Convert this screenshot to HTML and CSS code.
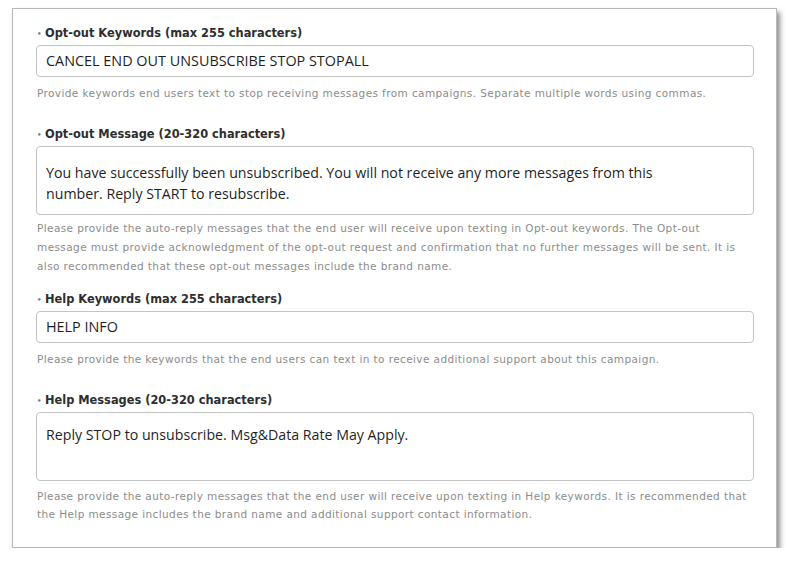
FILE: index.html
```html
<!DOCTYPE html>
<html lang="en">
<head>
    <meta charset="UTF-8">
    <meta name="viewport" content="width=device-width, initial-scale=1.0">
    <title>Opt-out and Help Settings</title>
    <link rel="stylesheet" href="styles.css">
</head>
<body>
    <div class="card">

        <!-- Opt-out keywords -->
        <div class="field">
            <label class="field-label"><span class="dot">&bull;</span>Opt-out Keywords (max 255 characters)</label>
            <div class="input">CANCEL END OUT UNSUBSCRIBE STOP STOPALL</div>
            <p class="hint">Provide keywords end users text to stop receiving messages from campaigns. Separate multiple words using commas.</p>
        </div>

        <!-- Opt-out message -->
        <div class="field field-tight">
            <label class="field-label"><span class="dot">&bull;</span>Opt-out Message (20-320 characters)</label>
            <div class="textbox textbox-tall">You have successfully been unsubscribed. You will not receive any more messages from this<br>number. Reply START to resubscribe.</div>
            <p class="hint hint-long">Please provide the auto-reply messages that the end user will receive upon texting in Opt-out keywords. The Opt-out<br>message must provide acknowledgment of the opt-out request and confirmation that no further messages will be sent. It is<br>also recommended that these opt-out messages include the brand name.</p>
        </div>

        <!-- Help keywords -->
        <div class="field">
            <label class="field-label"><span class="dot">&bull;</span>Help Keywords (max 255 characters)</label>
            <div class="input">HELP INFO</div>
            <p class="hint">Please provide the keywords that the end users can text in to receive additional support about this campaign.</p>
        </div>

        <!-- Help messages -->
        <div class="field field-last">
            <label class="field-label"><span class="dot">&bull;</span>Help Messages (20-320 characters)</label>
            <div class="textbox">Reply STOP to unsubscribe. Msg&amp;Data Rate May Apply.</div>
            <p class="hint hint-long hint-help">Please provide the auto-reply messages that the end user will receive upon texting in Help keywords. It is recommended that<br>the Help message includes the brand name and additional support contact information.</p>
        </div>

    </div>
</body>
</html>
```

FILE: styles.css
```css
body {
    margin: 0;
    padding: 8px 0 0 12px;
    background-color: #ffffff;
    font-family: "Open Sans", Arial, sans-serif;
}

/* Card holding the form */
.card {
    width: 718px;
    padding: 16px 22px 24px 23px;
    background-color: #fff;
    border: 1px solid #b9b9b9;
    box-shadow: 3px 4px 5px rgba(0, 0, 0, 0.45);
}

.field {
    margin-bottom: 25px;
}

.field-tight {
    margin-bottom: 15px;
}

.field-last {
    margin-bottom: 0;
}

.field-label {
    display: block;
    height: 16px;
    line-height: 16px;
    margin-bottom: 4px;
    font-family: "DejaVu Sans", Verdana, sans-serif;
    font-size: 11.4px;
    font-weight: bold;
    color: #2e2e2e;
}

.dot {
    display: inline-block;
    width: 8px;
    margin-left: 1px;
    font-size: 7px;
    color: #777;
    vertical-align: middle;
    line-height: 10px;
}

/* Single line input */
.input {
    height: 30px;
    line-height: 30px;
    padding: 0 9px;
    border: 1px solid #c4c4c4;
    border-radius: 4px;
    font-size: 14.4px;
    color: #1f1f1f;
}

/* Multi line box */
.textbox {
    height: 56px;
    padding: 11px 9px 0 9px;
    line-height: 21px;
    border: 1px solid #c4c4c4;
    border-radius: 4px;
    font-size: 14.2px;
    color: #1f1f1f;
}

.textbox-tall {
    height: 52px;
    padding-top: 15px;
}

.hint {
    margin: 8px 0 0 1px;
    line-height: 16px;
    font-family: "DejaVu Sans", Verdana, sans-serif;
    font-size: 10.5px;
    letter-spacing: 0.4px;
    color: #8c8c8c;
    white-space: nowrap;
}

.hint-long {
    margin-top: 4px;
    line-height: 19px;
}

.hint-help {
    margin-top: 6px;
    line-height: 18px;
}
```
